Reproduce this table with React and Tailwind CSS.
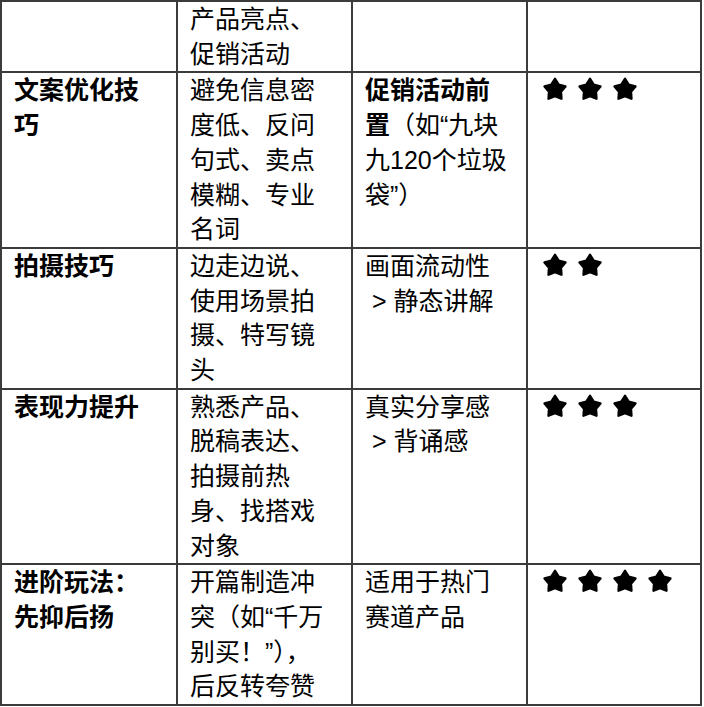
import React from 'react';

const rows = [
  { skill: '', method: '产品亮点、促销活动', point: null, stars: 0 },
  {
    skill: '文案优化技巧',
    method: '避免信息密度低、反问句式、卖点模糊、专业名词',
    point: (
      <>
        <span className="font-bold">促销活动前置</span>（如“九块九120个垃圾袋”）
      </>
    ),
    stars: 3,
  },
  { skill: '拍摄技巧', method: '边走边说、使用场景拍摄、特写镜头', point: '画面流动性 \u00a0>\u00a0静态讲解', stars: 2 },
  { skill: '表现力提升', method: '熟悉产品、脱稿表达、拍摄前热身、找搭戏对象', point: '真实分享感 \u00a0>\u00a0背诵感', stars: 3 },
  { skill: '进阶玩法：先抑后扬', method: '开篇制造冲突（如“千万别买！”），后反转夸赞', point: '适用于热门赛道产品', stars: 4 },
];

// rounded, chunky five-point star
const Star = () => (
  <svg width="26" height="26" viewBox="0 0 26 26" className="block">
    <path
      d="M13 2.8 L16.7 8.7 L23.46 10.4 L18.99 15.75 L19.47 22.7 L13 20.1 L6.53 22.7 L7.01 15.75 L2.54 10.4 L9.3 8.7 Z"
      fill="#000"
      stroke="#000"
      strokeWidth="2.4"
      strokeLinejoin="round"
    />
  </svg>
);

const cell = 'border-r-2 border-b-2 border-[#3b3b3b] pl-3 pr-4';

export default function App() {
  return (
    <div
      className="bg-white min-h-screen text-black text-[25px] leading-[34.7px]"
      style={{ fontFamily: '"Liberation Sans", "Noto Sans CJK SC", sans-serif' }}
    >
      <div className="w-[702px] grid grid-cols-[176px_175px_175px_174px] border-l-2 border-t-2 border-[#3b3b3b]">
        {rows.map((r, i) => (
          <React.Fragment key={i}>
            <div className={`${cell} font-bold`}>{r.skill}</div>
            <div className={cell}>{r.method}</div>
            <div className={cell}>{r.point}</div>
            <div className={cell}>
              <div className="flex gap-[9px] pt-[3px] ml-[2px]">
                {Array.from({ length: r.stars }).map((_, k) => (
                  <Star key={k} />
                ))}
              </div>
            </div>
          </React.Fragment>
        ))}
      </div>
    </div>
  );
}
